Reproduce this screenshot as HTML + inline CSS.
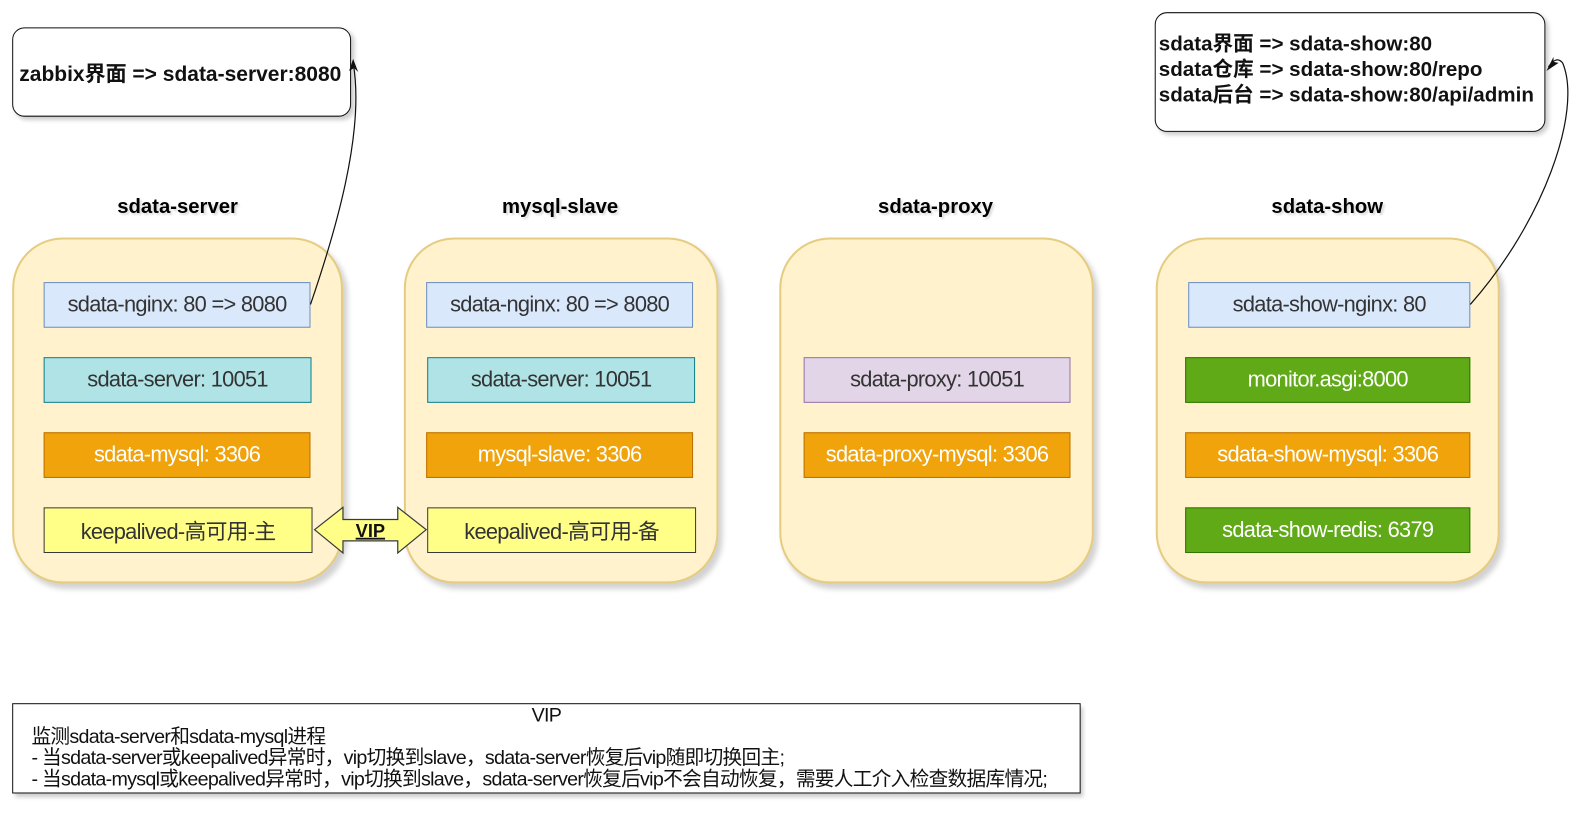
<!DOCTYPE html>
<html><head><meta charset="utf-8"><style>
body{margin:0;width:1588px;height:825px;background:#fff;position:relative;overflow:hidden;font-family:"Liberation Sans","Noto Sans CJK SC",sans-serif;}
#w{position:absolute;left:0;top:0;width:1565px;height:813px;transform:scale(1.0147);transform-origin:0 0;}
.a{position:absolute;box-sizing:border-box;}
.c{background:#fff2cc;border:2px solid #e6cc80;border-radius:50px;box-shadow:4px 5px 5px rgba(0,0,0,0.18);}
.b{display:flex;align-items:center;justify-content:center;font-size:21.5px;letter-spacing:-0.7px;border:1.5px solid;color:#333;white-space:nowrap;}
.n{background:#dae8fc;border-color:#6c8ebf;}
.s{background:#b0e3e6;border-color:#0e8088;}
.m{background:#f0a30a;border-color:#bd7000;color:#fff;}
.k{background:#ffff88;border-color:#36393d;}
.p{background:#e1d5e7;border-color:#9673a6;}
.g{background:#60a917;border-color:#2d7600;color:#fff;}
.l{font-weight:bold;font-size:20px;text-align:center;width:200px;text-shadow:2px 2px 2px rgba(0,0,0,0.15);}
.t{background:#fff;border:1.5px solid #111;border-radius:12px;box-shadow:3px 3px 4px rgba(0,0,0,0.2);font-weight:bold;font-size:20.3px;color:#111;}
</style></head><body><div id="w">
<div class="a t" style="left:12px;top:27px;width:334px;height:88px;display:flex;align-items:center;padding-left:6px;white-space:nowrap;font-size:20.7px;">zabbix界面 =&gt; sdata-server:8080</div>
<div class="a t" style="left:1138px;top:12px;width:385px;height:118px;padding:19px 0 0 3px;line-height:25px;white-space:nowrap;">sdata界面 =&gt; sdata-show:80<br>sdata仓库 =&gt; sdata-show:80/repo<br>sdata后台 =&gt; sdata-show:80/api/admin</div>

<div class="a l" style="left:75px;top:193px;">sdata-server</div>
<div class="a l" style="left:452px;top:193px;">mysql-slave</div>
<div class="a l" style="left:822px;top:193px;">sdata-proxy</div>
<div class="a l" style="left:1208px;top:193px;">sdata-show</div>

<div class="a c" style="left:12px;top:234px;width:326px;height:341px;"></div>
<div class="a c" style="left:398px;top:234px;width:310px;height:341px;"></div>
<div class="a c" style="left:768px;top:234px;width:310px;height:341px;"></div>
<div class="a c" style="left:1139px;top:234px;width:339px;height:341px;"></div>

<div class="a b n" style="left:43px;top:278px;width:263px;height:45px;">sdata-nginx: 80 =&gt; 8080</div>
<div class="a b s" style="left:43px;top:352px;width:264px;height:45px;">sdata-server: 10051</div>
<div class="a b m" style="left:43px;top:426px;width:263px;height:45px;">sdata-mysql: 3306</div>
<div class="a b k" style="left:43px;top:500px;width:265px;height:45px;">keepalived-高可用-主</div>

<div class="a b n" style="left:420px;top:278px;width:263px;height:45px;">sdata-nginx: 80 =&gt; 8080</div>
<div class="a b s" style="left:421px;top:352px;width:264px;height:45px;">sdata-server: 10051</div>
<div class="a b m" style="left:420px;top:426px;width:263px;height:45px;">mysql-slave: 3306</div>
<div class="a b k" style="left:421px;top:500px;width:265px;height:45px;">keepalived-高可用-备</div>

<div class="a b p" style="left:792px;top:352px;width:263px;height:45px;">sdata-proxy: 10051</div>
<div class="a b m" style="left:792px;top:426px;width:263px;height:45px;">sdata-proxy-mysql: 3306</div>

<div class="a b n" style="left:1171px;top:278px;width:278px;height:45px;">sdata-show-nginx: 80</div>
<div class="a b g" style="left:1168px;top:352px;width:281px;height:45px;">monitor.asgi:8000</div>
<div class="a b m" style="left:1168px;top:426px;width:281px;height:45px;">sdata-show-mysql: 3306</div>
<div class="a b g" style="left:1168px;top:500px;width:281px;height:45px;">sdata-show-redis: 6379</div>

<svg class="a" style="left:0;top:0" width="1565" height="813">
<path d="M310,522 L338,500 L338,512 L392,512 L392,500 L420,522 L392,545 L392,533 L338,533 L338,545 Z" fill="#ffff88" stroke="#36393d" stroke-width="1.2"/>
<text x="365" y="529" font-family="Liberation Sans" font-size="18" font-weight="bold" text-anchor="middle" text-decoration="underline" fill="#111">VIP</text>
<path d="M306,300 C330,230 360,130 348,62" fill="none" stroke="#111" stroke-width="1.2"/>
<path d="M348,58 L344,70 L349,67 L353,71 Z" fill="#111"/>
<path d="M1449,300 C1520,220 1560,110 1540,62 C1535,56 1530,60 1526,66" fill="none" stroke="#111" stroke-width="1.2"/>
<path d="M1524,70 L1536,62 L1531,61 L1531,56 Z" fill="#111"/>
</svg>

<div class="a" style="left:12px;top:693px;width:1053px;height:89px;border:1.5px solid #111;box-shadow:3px 4px 4px rgba(0,0,0,0.2);font-size:19.4px;letter-spacing:-0.7px;color:#111;line-height:21px;padding:1px 0 0 18px;white-space:nowrap;">
<div style="text-align:center;margin-left:-18px;">VIP</div>
监测sdata-server和sdata-mysql进程<br>- 当sdata-server或keepalived异常时，vip切换到slave，sdata-server恢复后vip随即切换回主;<br>- 当sdata-mysql或keepalived异常时，vip切换到slave，sdata-server恢复后vip不会自动恢复，需要人工介入检查数据库情况;
</div>
</div></body></html>
